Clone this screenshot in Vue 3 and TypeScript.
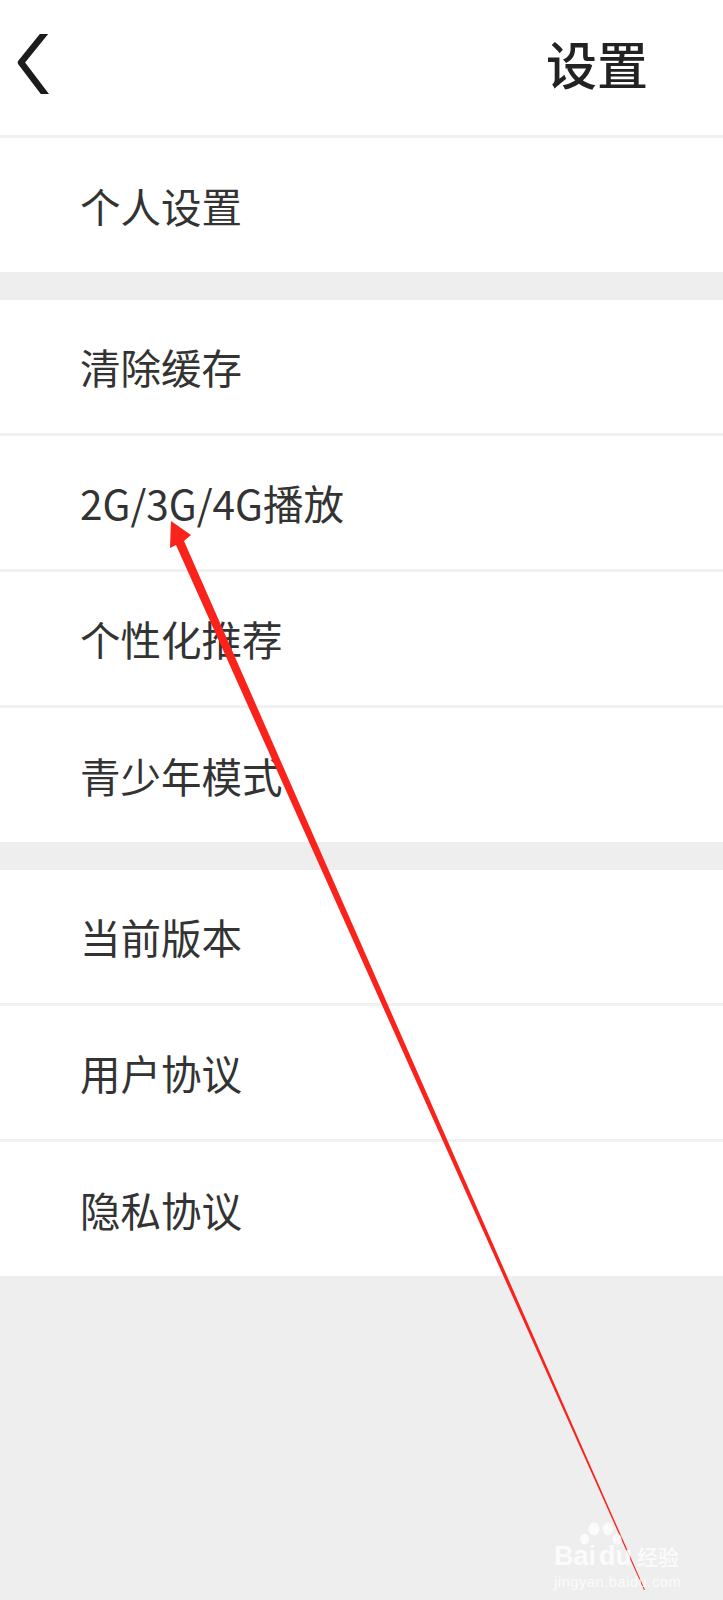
<script setup lang="ts">
const groups: string[][] = [
  ['个人设置'],
  ['清除缓存', '2G/3G/4G播放', '个性化推荐', '青少年模式'],
  ['当前版本', '用户协议', '隐私协议'],
]
</script>

<template>
  <div class="page">
    <header class="bar">
      <svg class="back" width="36" height="60" viewBox="0 0 36 60">
        <path d="M31 5 L6 36 L31 69" transform="translate(0 -7.5)" fill="none" stroke="#1c1c1c" stroke-width="6.5" stroke-linecap="round" stroke-linejoin="round" />
      </svg>
      <h1 class="title">设置</h1>
    </header>
    <section v-for="(group, g) in groups" :key="g" class="group">
      <div v-for="item in group" :key="item" class="row">{{ item }}</div>
    </section>

    <svg class="arrow" width="723" height="1600" viewBox="0 0 723 1600">
      <polygon points="171,521 191,535 184,541 645,1590 644,1590 176,545 170,548" fill="#f9231c" />
    </svg>

    <div class="mark">
      <svg class="paw" width="44" height="46" viewBox="0 0 44 46">
        <g fill="#fff" fill-opacity="0.75">
          <ellipse cx="14" cy="7" rx="5.5" ry="6.5" />
          <ellipse cx="28" cy="7" rx="5.5" ry="6.5" />
          <ellipse cx="4.500" cy="17" rx="4.500" ry="5.500" />
          <ellipse cx="37" cy="17" rx="4.500" ry="5.500" />
        </g>
      </svg>
      <div class="brand"><span class="bai">Bai</span><span class="du">du</span><span class="jy">经验</span></div>
      <div class="url">jingyan.baidu.com</div>
    </div>
  </div>
</template>

<style>
html, body { margin: 0; background: #eeeeee; }
</style>

<style scoped>
.page {
  position: relative;
  width: 723px;
  height: 1600px;
  background: #eeeeee;
  overflow: hidden;
  font-family: "Noto Sans CJK SC", "Noto Sans", sans-serif;
}
.bar {
  height: 135px;
  background: #fff;
  border-bottom: 3px solid #f1f1f1;
  display: flex;
  align-items: flex-start;
  justify-content: space-between;
  padding: 0 75px 0 15px;
}
.back { margin-top: 34px; }
.title {
  margin: 0;
  margin-top: 27px;
  font-size: 51px;
  line-height: 72px;
  font-weight: 500;
  color: #222;
}
.group { background: #fff; margin-bottom: 28px; }
.group:last-of-type { margin-bottom: 0; }
.row {
  height: 133px;
  padding-left: 80px;
  display: flex;
  align-items: center;
  font-size: 40.5px;
  font-weight: 400;
  color: #333;
  border-bottom: 3px solid #f1f1f1;
  box-sizing: content-box;
}
.row:last-child { border-bottom: 0; height: 134px; }
.arrow { position: absolute; left: 0; top: 0; pointer-events: none; }
.mark {
  position: absolute;
  left: 554px;
  top: 1520px;
  width: 140px;
  height: 76px;
  color: rgba(255, 255, 255, 0.8);
  font-family: "Liberation Sans", "Noto Sans CJK SC", sans-serif;
}
.paw { position: absolute; left: 26px; top: 2px; }
.brand {
  position: absolute;
  left: 0;
  top: 20px;
  display: flex;
  align-items: baseline;
  font-size: 27px;
  line-height: 32px;
  font-weight: 700;
  white-space: nowrap;
}
.du { margin-left: 3px; }
.jy { margin-left: 5px; font-size: 21px; font-weight: 500; }
.url {
  position: absolute;
  left: 0;
  top: 53px;
  font-size: 14.500px;
  line-height: 18px;
  letter-spacing: 0.6px;
  white-space: nowrap;
}
</style>
